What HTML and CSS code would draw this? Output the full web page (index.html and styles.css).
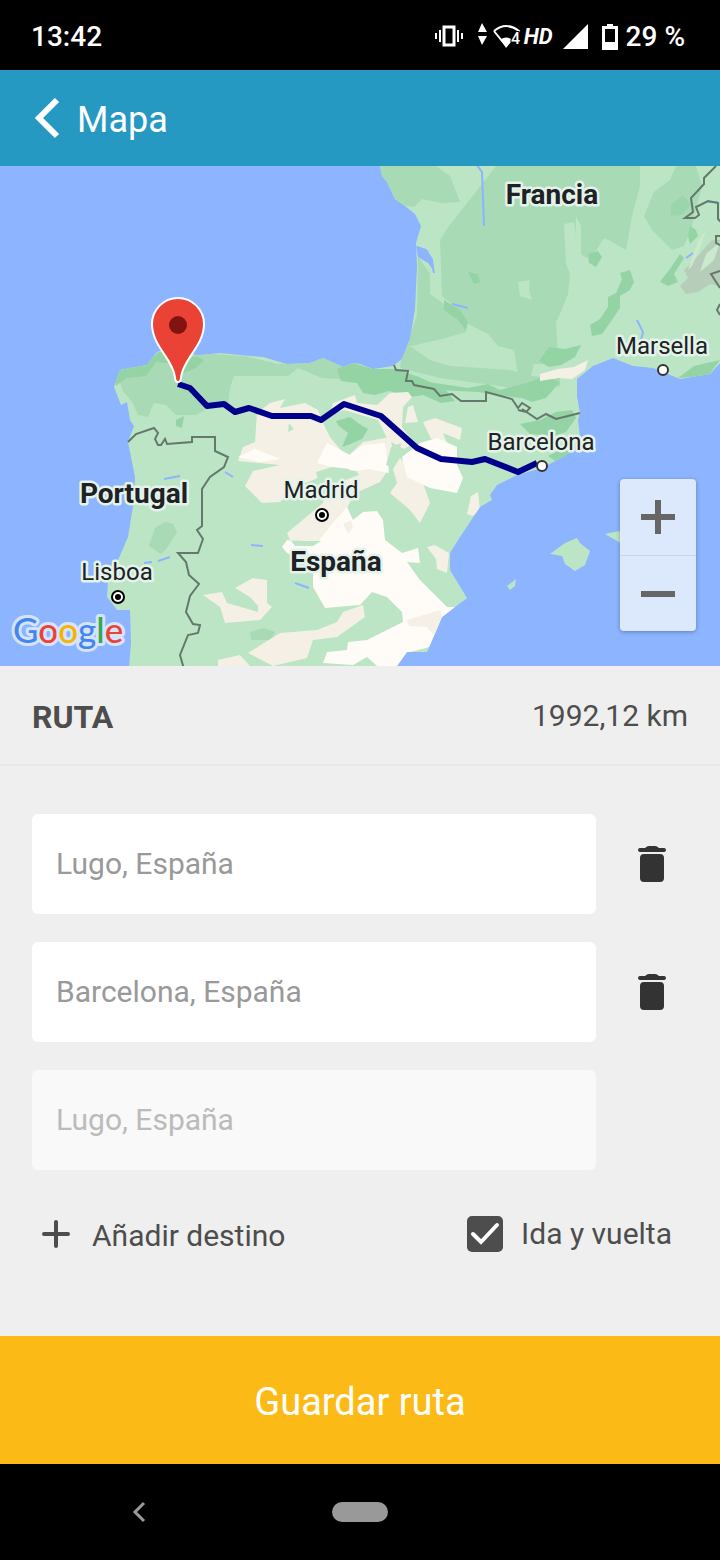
FILE: index.html
```html
<!DOCTYPE html>
<html lang="es">
<head>
<meta charset="UTF-8" />
<meta name="viewport" content="width=device-width,initial-scale=1" />
<title>Mapa</title>
<link rel="stylesheet" href="styles.css">
</head>
<body>
  <div class="statusbar">
    <span class="clock">13:42</span>
    <div class="status-icons">
      <svg class="sys-icons" width="87" height="32" viewBox="434 20 87 32" fill="#fff">
        <path d="M434 32h2v6h-2zM438 29h2v12h-2zM456 29h2v12h-2zM460 32h2v6h-2z" />
        <rect x="443" y="26" width="10" height="18" fill="none" stroke="#fff" stroke-width="3" />
        <path d="M481 22l5 9h-9zM481 44l5-9h-9z" />
        <path d="M493 30q12-10 25 0l-6 8M493 30l12 15" fill="none" stroke="#fff" stroke-width="2" />
        <path d="M500 38q5-3 10 0v3l-5 6z" />
        <text class="wifi-num" x="510" y="43">4</text>
      </svg>
      <span class="hd">HD</span>
      <svg class="signal" width="25" height="25" viewBox="0 0 25 25"><path d="M25 0v25H0z" fill="#fff" /></svg>
      <svg class="battery" width="16" height="26" viewBox="0 0 16 26">
        <path d="M5 0h6v2h5v24H0V2h5z" fill="#fff" />
        <path d="M3 5h10v13H3z" fill="#000" />
      </svg>
      <span class="percent">29 %</span>
    </div>
  </div>

  <header class="header">
    <a href="#" class="back" aria-label="Volver">
      <svg width="26" height="42" viewBox="0 0 26 42"><path d="M23 3L5 21l18 18" fill="none" stroke="#fff" stroke-width="6" /></svg>
    </a>
    <h1>Mapa</h1>
  </header>

  <div class="map">
    <svg class="map-canvas" viewBox="0 166 720 500">
      <defs>
        <clipPath id="land">
          <path id="coast" d="M380 166L382 176 387 182 395 199 405 206 415 214 421 226 416 243 417 266 415 309 410 339 402 359 393 366 373 369 360 364 353 363 343 367 323 358 310 363 287 364 263 357 240 355 220 353 200 355 180 354 172 348 157 352 147 365 120 370 114 387 121 405 127 402 130 420 134 426 128 442 135 477 134 500 128 537 115 567 108 580 107 597 117 610 130 610 131 643 129 666 397 666 407 652 427 652 442 617 460 603 467 598 450 570 450 553 460 537 480 507 492 500 490 495 497 485 517 475 542 468 563 457 577 448 580 437 578 420 580 413 577 396 577 379 593 366 613 358 633 366 653 368 680 379 710 374 720 363V166z" />
        </clipPath>
      </defs>
      <rect y="166" width="720" height="500" fill="#8cb4ff" />
      <use href="#coast" fill="#bbe5c4" />
      <g clip-path="url(#land)">
        <!-- light woodland -->
        <g fill="#a8dab5">
          <path d="M376 166h60l14 10 10 26-18 1-20-4-8 8-12-2-20-12z" />
          <path d="M496 166h144v20l-8 30-6 34-14-8-8-4-10 16-8 4-8-6-4-30-10 2 2 40 4 10-2 20-8 20-4 8 2 36-14 6h-10l-6 24h-8l-6-38-16-4-10-12-20-10-14-18-12-10-2-56 6-10z" />
          <path d="M696 166h-20l-6 14-16 12-10 24 8 14 10 10 10 10 12-4 8-20 10-40z" />
          <path d="M418 256l12 18 0 20 14 10 22 18v10l-24 7-36 8 11-32z" />
          <path d="M402 352l8-6 20 14 20 6 60 4 20 6 30 2v8l-30 6-30-6-60-8-40-10z" />
          <path d="M114 366l40-10 24-4 66 4 34 8 50-6 30 8 4 14-40-2-24-10-10 8-54 0-4 12-2 18h-16l-16 9h-20l-10-10-12-2-6 14-10-2-5-12-10-12z" />
          <path d="M165 522l8 2 4 8-10 16-6 6-12-8 6-18z" />
          <path d="M250 632l14-4 11 4-4 8-20 0z" />
        </g>
        <!-- dense woodland -->
        <g fill="#94d4a4">
          <path d="M114 371l32-6 12-13h14l4 12-20-2-10 14-20 2-10 8z" />
          <path d="M182 362l14-6 8 4-8 8-12 5z" />
          <path d="M337 369l16-6 20 6h22l24 8 26 12 10 12-14 2-18-8-12 2-22-6-14 4-12-2-6-10-16-2z" />
          <path d="M336 421l14-4 8 6 10 6-6 10-14 6-6 2 6-14-10-8z" />
          <path d="M420 390l8-8 40 6 20-4 12 6 30-8 14-6 16 6-14 16-14 4-10-4-20-2-24-4-40-2z" />
          <path d="M549 347l16 2 16-4-6 12-14 8-12 2-10-6z" />
          <path d="M590 325l10-6 8-12 0-10 8-4 6-14-2-6 10-3 4 12-4 8-10 6 0 12-8 12-10 14-10 2z" />
          <path d="M588 254l10-3 4 6-6 10-7-4z" />
          <path d="M660 282l12-16 8-12 4 4-10 16 4 8-10 4zM690 226l6 4 2 6-8 8-2-8z" />
          <path d="M468 272l10 2 2 8-6 2zM444 300l16 10 8 12-2 8-8-10-14-10z" />
          <path d="M520 424l20-4 16-8 16-2 4 8-10 14-12 4-24-2z" />
          <path d="M548 456l14-7 20-8-8 12-16 10zM720 360l-26 6-16 12 30-2z" />
          <path d="M176 420l8-4-2 12-6-2z" />
          <path d="M671 205l12-10 8 10-10 10-10 1z" opacity=".7" />
        </g>
        <path d="M684 270l12-12 16-18h8v46l-10-2-12 8-12 2-6-8 8-8z" fill="#b6cdb9" />
        <path d="M700 238l6-8-6 18-8 18-4 4 6-18zM706 254l14-12-6 18-14 12z" fill="#cce9cf" />
        <path d="M518 282l12-2-1 10 3 10-12-4zM576 216l5 10 0 40-6-10z" fill="#bbe5c4" />
        <!-- farmland and dry areas -->
        <g fill="#f5f0e5">
          <path d="M540 374l18-5 16-2 14-7-3 10-13 9-14-1-18 3z" />
          <path d="M257 413l13-10 15-4-5 9 25-5 13 7 5 13 7 14 15 18 5 13-14 8-18 2-20 8-18 16-18 1-17-17 8-15 27-6-42-4 5-14 12-5z" />
          <path d="M333 403l22-8 2 8 20 2 13-12 18-1 4 5-9 10-1 20 12 16-10 6-16-9-10-20-34-10-14 4z" />
          <path d="M408 407l5-2 5 17-13 1zM423 422l12-4 27 10-2 12-17-7 4 10-16-4z" />
          <path d="M347 457l16-15 27-5 3 13-5 20-8 12-22 10-8 10-10 20-23 20-27-2-3-7 36-30 4-16 32-12z" />
          <path d="M400 458l23 25 7 20-10 20-10-13-20-17 7-10-4-14z" />
          <path d="M427 547l8-2 14 8-2 20-10-4-1-10z" />
          <path d="M203 595l19-3 5 11 14 4 17 5 0-6-8-9-15-9 18-10 14 2 0 23 5 4-12 13-35 3-5-16z" />
          <path d="M248 653l32-20 37-3 20-8 6-10 20-7 2 12-28 20-24 3-6 18-34 8zM218 660l22-5 10 11h-32z" />
          <path d="M467 514l4-18 7-4 2 18-7 6z" />
        </g>
        <g fill="#fffcf8">
          <path d="M327 443l23 12 13-10 22-2 4 30-20-4-14 2-18-3-20-5zM238 457l17-8 25 10-20 3z" />
          <path d="M402 457l18-14 17-5 20 9v18l6 13-6 15-27-5-23-11z" />
          <path d="M353 520l10-8 14-1 6 9 2 20 17 13 16-5 2 15-13-1 13 18 27 27h20l-25 10-12 30-20 5-10 14h-23l-10-9-14 8-30-2 4-11 20-2 1-8 19-2 36-18-1-10-15-15-15-5-12 13-35 3-12-21v-24l-26-10-5-6 5-7 30 3 16-20 14-16z" />
          <path d="M440 618l27-20-7 18z" />
        </g>
        <path d="M407 620l33-10 2 7-7 20-8-10-18-1zM343 524l8-4 2 8-5 6z" fill="#f5f0e5" />
        <path d="M288 432l6-3-5-6zM316 472l16-5 18 2-10 7-22 4zM291 541l30 0-8 5-18 0zM391 447l10-4-2 12-8 12-5-2z" fill="#bbe5c4" />
        <!-- rivers and lakes -->
        <g stroke="#8cb4ff" fill="none" stroke-width="2">
          <path d="M476 164l6 8 2 54M417 247l10 4 5 12 2 10" />
          <path d="M452 304l16 4M637 320l6 12-2 8M686 258l7-5M164 479l16-3M158 561l12-4M144 563l8-1M295 583l14 5M225 472l8 5M251 545l12 1M708 202h10" />
        </g>
        <path d="M416 246l10 3 7 10 1 12-6-8-10-6z" fill="#8cb4ff" />
      </g>
      <!-- islands -->
      <g fill="#bbe5c4">
        <path d="M550 554l15-11 12-5 3 5 10 8-5 14-10 6-10-7-3-8zM605 534l14-3 8 15-10-5zM507 586l9-7-1 7-5 4z" />
      </g>
      <!-- borders -->
      <g class="border">
        <path d="M128 442l8-8 18-6 4 5-3 6 3 6 3 0 4-6 2 5 25-2v-5h23v14l13 6-4 10-14 10-8 12v37l-5 4 6 9-5 14h-20l8 9 3 13 10 9-9 12-4 16 7 12 7 1-2 8-10 2-8 20 4 14" />
        <path d="M394 365l2 5 12 1-2 10 6 0 2 4 20 4 6 7 12-2 9 7h25v-9l26 7 6 9 4-5 8 5-4 4-8-2M522 409l15 10 9-5 10 5 24-6" />
        <path d="M716 166l-12 12v6l-13 14 2 14-8 6 10 0 4-3-3-8 12-6 10 2v16l4 4M720 236h-4v7l4 2M720 271l-9 3 9 14M720 304l-3 6 3 5" />
      </g>
      <!-- route -->
      <polyline class="route" points="178,384 190,388 207,406 224,404 235,412 249,408 272,416 311,416 321,420 344,404 381,416 417,448 441,459 472,462 485,459 518,472 537,463" />
      <!-- cities -->
      <g class="city">
        <circle cx="663" cy="370" r="5" />
        <circle cx="542" cy="466" r="5" />
      </g>
      <g class="capital">
        <circle cx="322" cy="515" r="6" /><circle class="dot" cx="322" cy="515" r="3" />
        <circle cx="118" cy="597" r="6" /><circle class="dot" cx="118" cy="597" r="3" />
      </g>
      <g class="city-name">
        <text x="662" y="354">Marsella</text>
        <text x="541" y="450">Barcelona</text>
        <text x="321" y="498">Madrid</text>
        <text x="117" y="580">Lisboa</text>
      </g>
      <g class="country-name">
        <text x="552" y="204">Francia</text>
        <text x="134" y="503">Portugal</text>
        <text x="336" y="571">España</text>
      </g>
      <!-- pin -->
      <path d="M178 382c-2 0-3-2-3-5-2-18-23-31-23-53a26 26 0 0 1 52 0c0 22-21 35-23 53 0 3-1 5-3 5z" fill="#ea4335" stroke="#fff" stroke-width="2" />
      <circle cx="178" cy="325" r="9" fill="#811411" />
      <text class="logo" x="13" y="643"><tspan fill="#4285f4">G</tspan><tspan fill="#ea4335">o</tspan><tspan fill="#f4b400">o</tspan><tspan fill="#4285f4">g</tspan><tspan fill="#34a853">l</tspan><tspan fill="#ea4335">e</tspan></text>
    </svg>
    <div class="zoom">
      <button type="button" aria-label="Acercar"><svg width="34" height="34" viewBox="0 0 34 34"><path d="M14 0h6v14h14v6H20v14h-6V20H0v-6h14z" fill="#666" /></svg></button>
      <button type="button" aria-label="Alejar"><svg width="34" height="34" viewBox="0 0 34 34"><path d="M0 14h34v6H0z" fill="#666" /></svg></button>
    </div>
  </div>

  <section class="summary">
    <h2>RUTA</h2>
    <span class="distance">1992,12 km</span>
  </section>

  <form class="route-form">
    <div class="stop">
      <input type="text" value="Lugo, España" aria-label="Origen" />
      <button type="button" class="trash" aria-label="Eliminar origen">
        <svg width="28" height="36" viewBox="0 0 28 36" fill="#333"><path d="M2 2h5q2-2 4-2h6q2 0 4 2h5a2 2 0 0 1 0 4H2a2 2 0 0 1 0-4z" /><rect x="2" y="8" width="24" height="28" rx="4" /></svg>
      </button>
    </div>
    <div class="stop">
      <input type="text" value="Barcelona, España" aria-label="Destino" />
      <button type="button" class="trash" aria-label="Eliminar destino">
        <svg width="28" height="36" viewBox="0 0 28 36" fill="#333"><path d="M2 2h5q2-2 4-2h6q2 0 4 2h5a2 2 0 0 1 0 4H2a2 2 0 0 1 0-4z" /><rect x="2" y="8" width="24" height="28" rx="4" /></svg>
      </button>
    </div>
    <div class="stop">
      <input type="text" value="Lugo, España" aria-label="Vuelta" disabled />
    </div>
    <div class="options">
      <button type="button" class="add">
        <svg width="28" height="28" viewBox="0 0 28 28"><path d="M14 2v24M2 14h24" stroke="#4d4d4d" stroke-width="4" stroke-linecap="round" /></svg>
        <span>Añadir destino</span>
      </button>
      <label class="roundtrip"><input type="checkbox" checked />Ida y vuelta</label>
    </div>
  </form>

  <button type="button" class="save">Guardar ruta</button>

  <nav class="navbar">
    <a href="#" aria-label="Atrás"><svg width="14" height="22" viewBox="0 0 14 22"><path d="M12 2L3 11l9 9" fill="none" stroke="#999" stroke-width="3" /></svg></a>
    <a href="#" class="home" aria-label="Inicio"></a>
    <span></span>
  </nav>
</body>
</html>
```

FILE: styles.css
```css
/* ---------- Theme Colors ---------- */
:root {
  --brand: #2699c3;
  --accent: #fbba16;
  --bg: #efefef;
  --text: #4d4d4d;
}
/* ---------- Base ---------- */
* { box-sizing: border-box; }
body {
  margin: 0;
  min-height: 100vh;
  display: flex;
  flex-direction: column;
  font-family: Roboto, "Noto Sans", sans-serif;
  font-size: 30px;
  line-height: 36px;
  background: var(--bg);
  color: var(--text);
}
button, input { font: inherit; }
button { border: 0; padding: 0; background: none; color: inherit; cursor: pointer; }
svg { display: block; flex: none; }
h1, h2 { margin: 0; }

/* ---------- Status bar ---------- */
.statusbar {
  display: flex;
  justify-content: space-between;
  align-items: center;
  height: 70px;
  padding: 3px 35px 0 31px;
  background: #000;
  color: #fff;
  font-size: 28px;
  font-weight: 500;
}
.status-icons { display: flex; align-items: center; }
.sys-icons { margin-right: 2px; }
.wifi-num { font-size: 16px; stroke: #000; stroke-width: 2px; paint-order: stroke; }
.hd { font-size: 22px; font-style: italic; font-weight: 700; }
.signal { margin-left: 10px; }
.battery { margin: 0 8px 0 14px; }

/* ---------- Header ---------- */
.header {
  display: flex;
  align-items: center;
  gap: 17px;
  height: 96px;
  padding: 4px 34px 0;
  background: var(--brand);
  color: #fff;
}
.back { padding-bottom: 4px; }
h1 { font-size: 36px; font-weight: 400; }

/* ---------- Map ---------- */
.map { position: relative; }
.map-canvas { width: 100%; height: auto; }
.map-canvas text { paint-order: stroke; stroke-linejoin: round; }
.border { fill: none; stroke: #64796b; stroke-width: 2; }
.route { fill: none; stroke: #00008b; stroke-width: 6; stroke-linejoin: round; }
.city circle { fill: #fff; stroke: #333; stroke-width: 2; }
.capital circle { fill: #fff; stroke: #000; stroke-width: 2; }
.capital .dot { fill: #000; stroke: none; }
.city-name, .country-name { text-anchor: middle; fill: #202124; stroke: #e4f3ea; stroke-width: 5px; }
.city-name { font-size: 24px; }
.country-name { font-size: 28px; font-weight: 700; }
.logo { font-family: Lato, sans-serif; font-size: 35px; font-weight: 500; stroke: #d6e4fb; stroke-width: 6px; }
.zoom {
  position: absolute;
  right: 24px;
  bottom: 35px;
  width: 76px;
  border-radius: 4px;
  background: #dce8fc;
  box-shadow: 0 1px 4px rgba(0, 0, 0, 0.3);
}
.zoom button { display: grid; place-items: center; width: 100%; height: 76px; }
.zoom button + button { border-top: 1px solid #c8d5e8; }

/* ---------- Route form ---------- */
.summary {
  display: flex;
  justify-content: space-between;
  align-items: center;
  height: 100px;
  padding: 0 32px;
  border-bottom: 2px solid #e8e8e8;
}
h2 { padding-top: 4px; font-size: 32px; font-weight: 700; }
.distance { padding-top: 2px; }
.route-form {
  flex: 1;
  display: flex;
  flex-direction: column;
  gap: 28px;
  padding: 48px 32px;
}
.stop { display: grid; grid-template-columns: 1fr 72px; gap: 20px; }
.stop input {
  width: 100%;
  height: 100px;
  padding: 0 24px 2px;
  border: 0;
  border-radius: 6px;
  background: #fff;
  color: #999;
}
.stop input:disabled { background: #f9f9f9; color: #bbb; }
.trash { display: grid; place-items: center; }
.options {
  display: flex;
  justify-content: space-between;
  align-items: center;
  padding: 16px 16px 0 10px;
}
.add { display: flex; align-items: center; gap: 22px; }
.add span { padding-top: 4px; }
.roundtrip { display: flex; align-items: center; gap: 18px; }
.roundtrip input {
  appearance: none;
  width: 36px;
  height: 36px;
  margin: 0;
  border-radius: 5px;
  background: var(--text) url("data:image/svg+xml,%3Csvg xmlns='http://www.w3.org/2000/svg' viewBox='0 0 36 36'%3E%3Cpath d='M6 18l8 8L30 9' fill='none' stroke='%23fff' stroke-width='4' stroke-linecap='round'/%3E%3C/svg%3E");
}
.save {
  height: 128px;
  padding-top: 4px;
  background: var(--accent);
  color: #fff;
  font-size: 38px;
}

/* ---------- Navigation bar ---------- */
.navbar {
  display: grid;
  grid-template-columns: repeat(3, 1fr);
  align-items: center;
  height: 96px;
  padding: 0 28px;
  background: #000;
}
.navbar a { justify-self: center; }
.home { width: 56px; height: 20px; border-radius: 10px; background: #999; }
```
